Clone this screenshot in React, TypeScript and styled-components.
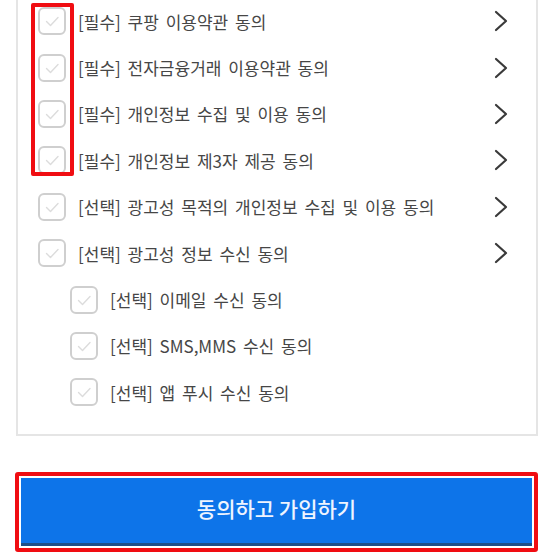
import styled, { createGlobalStyle } from "styled-components";

const GlobalStyle = createGlobalStyle`
  html, body {
    margin: 0;
    padding: 0;
    background: #ffffff;
    overflow: hidden;
  }
  body {
    font-family: "Noto Sans CJK KR", "Noto Sans", sans-serif;
  }
`;

interface Term {
  label: string;
  sub?: boolean;
  detail?: boolean;
}

const terms: Term[] = [
  { label: "[필수] 쿠팡 이용약관 동의", detail: true },
  { label: "[필수] 전자금융거래 이용약관 동의", detail: true },
  { label: "[필수] 개인정보 수집 및 이용 동의", detail: true },
  { label: "[필수] 개인정보 제3자 제공 동의", detail: true },
  { label: "[선택] 광고성 목적의 개인정보 수집 및 이용 동의", detail: true },
  { label: "[선택] 광고성 정보 수신 동의", detail: true },
  { label: "[선택] 이메일 수신 동의", sub: true },
  { label: "[선택] SMS,MMS 수신 동의", sub: true },
  { label: "[선택] 앱 푸시 수신 동의", sub: true },
];

function CheckBox() {
  return (
    <Box>
      <svg width="24" height="24" viewBox="0 0 24 24" fill="none">
        <path d="M6.5 12.5 L10.5 16.5 L18 8.5" stroke="#dcdcdc" strokeWidth="1.4" strokeLinecap="round" strokeLinejoin="round" />
      </svg>
    </Box>
  );
}

function Chevron() {
  return (
    <svg width="14" height="22" viewBox="0 0 14 22" fill="none">
      <path d="M2 2 L12 11 L2 20" stroke="#3a3a3a" strokeWidth="2.2" strokeLinecap="round" strokeLinejoin="round" />
    </svg>
  );
}

export default function App() {
  return (
    <Page>
      <GlobalStyle />
      <Card>
        <Highlight />
        {terms.map((t) => (
          <Row key={t.label} $sub={t.sub}>
            <CheckBox />
            <Label>{t.label}</Label>
            {t.detail && <Chevron />}
          </Row>
        ))}
      </Card>
      <ButtonFrame>
        <SubmitButton>동의하고 가입하기</SubmitButton>
      </ButtonFrame>
    </Page>
  );
}

const Page = styled.div`
  width: 523px;
  margin: 0 12px 0 15px;
`;

const Card = styled.div`
  position: relative;
  margin: -2px 0 0 1px;
  padding: 0 28px 18px 20px;
  border: 2px solid #e5e5e5;
  border-top: none;
  background: #fff;
`;

const Highlight = styled.div`
  position: absolute;
  left: 13px;
  top: 5px;
  width: 35px;
  height: 165px;
  border: 4px solid #f00d12;
  border-radius: 2px;
`;

const Row = styled.div<{ $sub?: boolean }>`
  display: flex;
  align-items: center;
  height: 46.4px;
  padding-left: ${(p) => (p.$sub ? "32px" : "0")};
`;

const Box = styled.div`
  flex: none;
  box-sizing: border-box;
  width: 28px;
  height: 28px;
  border: 2px solid #cfcfcf;
  border-radius: 6px;
  display: flex;
  align-items: center;
  justify-content: center;
  margin-right: 12px;
`;

const Label = styled.span`
  flex: 1;
  font-size: 17px;
  word-spacing: 3px;
  color: #464646;
  white-space: nowrap;
`;

const ButtonFrame = styled.div`
  margin-top: 36px;
  border: 4px solid #f00d12;
  border-radius: 3px;
  padding: 2px;
  background: #fff;
`;

const SubmitButton = styled.button`
  display: flex;
  align-items: center;
  justify-content: center;
  width: 100%;
  height: 68px;
  box-sizing: border-box;
  border: none;
  border-bottom: 3px solid #1d4f88;
  background: #0d74e9;
  color: #eef4ff;
  font-family: "Noto Sans CJK KR", "Noto Sans", sans-serif;
  font-size: 21px;
  font-weight: 500;
  padding: 0 0 4px;
  cursor: pointer;
`;
